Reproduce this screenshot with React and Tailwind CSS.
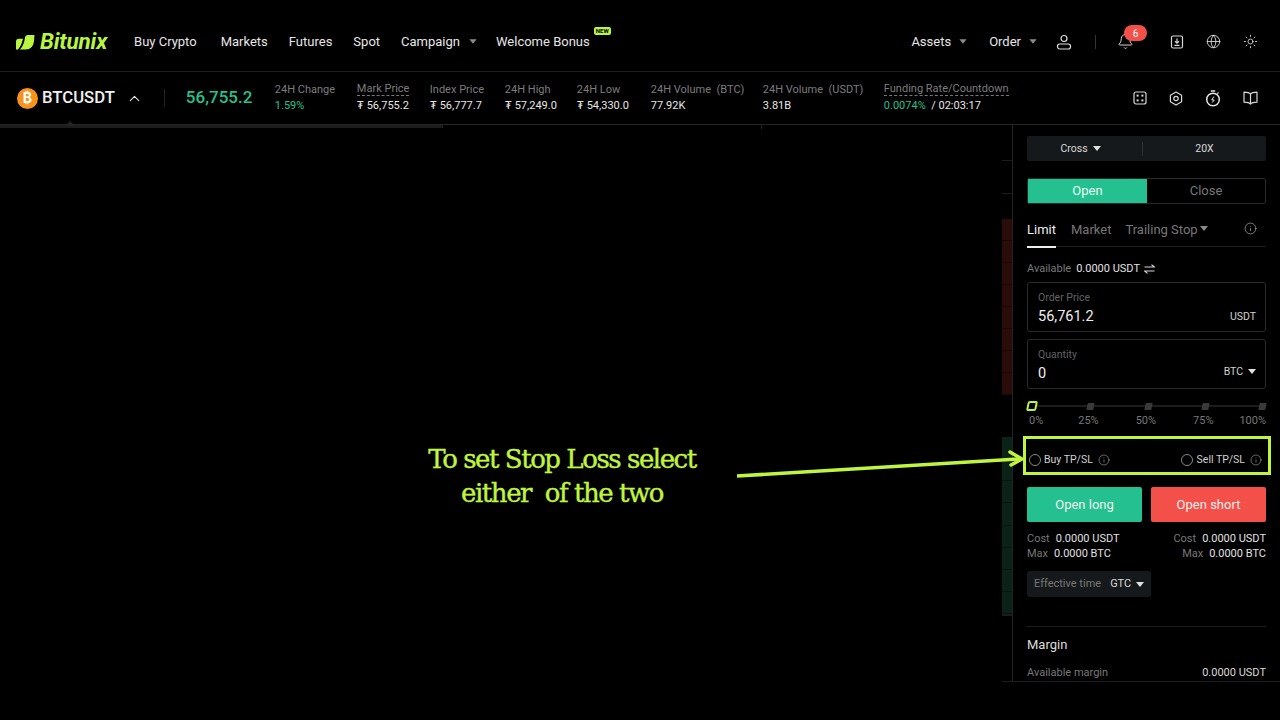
import { Info, ChevronUp, Bell, Globe, Sun } from 'lucide-react'

const navLinks = [
  { label: 'Buy Crypto', cls: 'ml-[27px]' },
  { label: 'Markets', cls: 'ml-[24px]' },
  { label: 'Futures', cls: 'ml-[21px]' },
  { label: 'Spot', cls: 'ml-[21px]' },
]

const stats = [
  { label: 'Mark Price', value: '₮ 56,755.2', w: 'w-[73px]', dashed: true },
  { label: 'Index Price', value: '₮ 56,777.7', w: 'w-[75px]' },
  { label: '24H High', value: '₮ 57,249.0', w: 'w-[72px]' },
  { label: '24H Low', value: '₮ 54,330.0', w: 'w-[74px]' },
  { label: '24H Volume  (BTC)', value: '77.92K', w: 'w-[112px]' },
  { label: '24H Volume  (USDT)', value: '3.81B', w: 'w-[121px]' },
]

const sliderTicks = [
  { label: '25%', cls: 'ml-[35px]' },
  { label: '50%', cls: 'ml-[37px]' },
  { label: '75%', cls: 'ml-[37px]' },
  { label: '100%', cls: 'ml-auto' },
]

function Caret({ className = 'border-t-[#8a8a8a]' }) {
  return <span className={`inline-block w-0 h-0 border-x-[4px] border-x-transparent border-t-[5px] ${className}`} />
}

function Logo() {
  return (
    <svg width="20" height="16" viewBox="0 0 20 16" className="shrink-0">
      <path d="M1 7.5 C1 5.5 2.5 4.8 4 4.8 L8 4.8 C7 9 5.5 13 3 15.5 L1 15.5 Z" fill="#b9f641" />
      <path d="M5 15.5 C8 12.5 9.5 8 10 3.5 C10.2 1.8 11.5 1 13 1 L19.5 1 L19 7 C18.5 12 15.5 15.5 10.5 15.5 Z" fill="#b9f641" />
    </svg>
  )
}

function BtcIcon() {
  return (
    <span className="w-[21px] h-[21px] rounded-full bg-[#f7931a] flex items-center justify-center text-white text-[14px] font-bold leading-none shrink-0">₿</span>
  )
}

function UserIcon() {
  return (
    <svg width="16" height="16" viewBox="0 0 16 16" fill="none" stroke="#e0e0e0" strokeWidth="1.2" className="ml-[19px]">
      <circle cx="8" cy="4.5" r="3" />
      <rect x="1.5" y="10" width="13" height="5" rx="2.2" />
    </svg>
  )
}

function CalcIcon() {
  return (
    <svg width="14" height="14" viewBox="0 0 14 14" fill="none" stroke="#d8d8d8" strokeWidth="1.2">
      <rect x="1" y="1" width="12" height="12" rx="2" />
      <rect x="3.6" y="3.6" width="2" height="2" fill="#d8d8d8" stroke="none" />
      <rect x="8.4" y="3.6" width="2" height="2" fill="#d8d8d8" stroke="none" />
      <rect x="3.6" y="8.4" width="2" height="2" fill="#d8d8d8" stroke="none" />
      <rect x="8.4" y="8.4" width="2" height="2" fill="#d8d8d8" stroke="none" />
    </svg>
  )
}

function SettingsHexIcon() {
  return (
    <svg width="14" height="15" viewBox="0 0 14 15" fill="none" stroke="#d8d8d8" strokeWidth="1.2">
      <path d="M7 1 12.6 4.2v6.6L7 14 1.4 10.8V4.2Z" strokeLinejoin="round" />
      <circle cx="7" cy="7.5" r="2.2" />
    </svg>
  )
}

function StopwatchIcon() {
  return (
    <svg width="16" height="17" viewBox="0 0 16 17" fill="none" stroke="#e6e6e6" strokeWidth="1.5">
      <path d="M5.8 1h4.4" />
      <path d="M12.3 3.6l1.2-1.1" strokeWidth="1.2" />
      <circle cx="8" cy="9.5" r="6.3" />
      <path d="M8.8 6.6 6.8 10h2.4l-2 2.6" strokeWidth="1" />
    </svg>
  )
}

function BookIcon() {
  return (
    <svg width="15" height="14" viewBox="0 0 15 14" fill="none" stroke="#d8d8d8" strokeWidth="1.2">
      <path d="M7.5 3 C6.5 1.8 4.5 1.2 1 1.2 V11.2 C4.5 11.2 6.5 11.8 7.5 13 C8.5 11.8 10.5 11.2 14 11.2 V1.2 C10.5 1.2 8.5 1.8 7.5 3 Z" strokeLinejoin="round" />
      <path d="M7.5 3v10" />
    </svg>
  )
}

function DownloadIcon() {
  return (
    <svg width="14" height="14" viewBox="0 0 14 14" fill="none" stroke="#d8d8d8" strokeWidth="1.2">
      <rect x="1.5" y="1" width="11" height="12" rx="1.5" />
      <path d="M7 3.5v4.5M5 6.3 7 8.2l2-1.9M4.5 10.4h5" />
    </svg>
  )
}

function SwapIcon() {
  return (
    <svg width="11" height="10" viewBox="0 0 11 10" fill="none" stroke="#d8d8d8" strokeWidth="1.2" className="ml-[4px]">
      <path d="M0.5 3h10L7.5 0.6" />
      <path d="M10.5 7H0.5L3.5 9.4" />
    </svg>
  )
}

function TopNav() {
  return (
    <header className="h-[72px] shrink-0 flex items-center pl-[15px] pr-[22px] pt-[12px] border-b border-[#1f1f1f] text-[#e6e6e6] text-[13px]">
      <Logo />
      <span className="ml-[5px] text-[22.5px] font-bold italic text-[#b9f641] leading-none tracking-[-0.2px]">Bitunix</span>
      {navLinks.map((l) => (
        <a key={l.label} className={l.cls}>{l.label}</a>
      ))}
      <a className="ml-[21px] flex items-center gap-[9px]">Campaign <Caret className="border-t-[#8a8a8a] scale-90" /></a>
      <a className="ml-[19px] relative">
        Welcome Bonus
        <span className="absolute -top-[5px] -right-[21px] bg-[#b9f641] text-black text-[6px] font-bold leading-none px-[2px] py-[1px] rounded-[2px]">NEW</span>
      </a>
      <div className="ml-auto flex items-center">
        <a className="flex items-center gap-[8px]">Assets <Caret className="border-t-[#8a8a8a] scale-90" /></a>
        <a className="ml-[22px] flex items-center gap-[8px]">Order <Caret className="border-t-[#8a8a8a] scale-90" /></a>
        <UserIcon />
        <span className="ml-[23px] w-px h-[14px] bg-[#333]" />
        <span className="ml-[21px] relative flex">
          <Bell size={17} strokeWidth={1.3} />
          <span className="absolute -top-[8px] left-[7px] w-[23px] h-[16px] rounded-full bg-[#f4504a] text-white text-[10px] flex items-center justify-center">6</span>
        </span>
        <span className="ml-[36px] flex"><DownloadIcon /></span>
        <Globe size={15} className="ml-[22px]" strokeWidth={1.3} />
        <Sun size={15} className="ml-[22px]" strokeWidth={1.3} />
      </div>
    </header>
  )
}

function TickerBar() {
  return (
    <div className="h-[53px] shrink-0 flex items-center pl-[17px] pr-[22px] border-b border-[#242424]">
      <BtcIcon />
      <span className="ml-[4px] text-[16.7px] font-medium text-[#f0f0f0]">BTCUSDT</span>
      <ChevronUp size={17} className="ml-[11px] text-[#e0e0e0]" strokeWidth={1.5} />
      <span className="ml-[21px] w-px h-[18px] bg-[#222]" />
      <span className="ml-[21px] text-[17px] font-medium text-[#25c08f] w-[89px]">56,755.2</span>
      <div className="w-[82px] text-[11px] leading-none -translate-y-px">
        <div className="text-[#7d7d7d]">24H Change</div>
        <div className="text-[#25c08f] mt-[5px]">1.59%</div>
      </div>
      {stats.map((s) => (
        <div key={s.label} className={`${s.w} shrink-0 text-[11px] leading-none -translate-y-px`}>
          <div className={`text-[#7d7d7d] whitespace-pre ${s.dashed ? 'w-fit border-b border-dashed border-[#777] pb-[1px]' : ''}`}>{s.label}</div>
          <div className={`text-[#e6e6e6] ${s.dashed ? 'mt-[4px]' : 'mt-[5px]'}`}>{s.value}</div>
        </div>
      ))}
      <div className="text-[11px] leading-none -translate-y-px">
        <div className="text-[#7d7d7d] border-b border-dashed border-[#777] pb-[1px]">Funding Rate/Countdown</div>
        <div className="mt-[4px] text-[#e6e6e6]"><span className="text-[#25c08f]">0.0074%</span> &nbsp;/ 02:03:17</div>
      </div>
      <div className="ml-auto flex items-center text-[#d8d8d8] gap-[22px]">
        <CalcIcon />
        <SettingsHexIcon />
        <StopwatchIcon />
        <BookIcon />
      </div>
    </div>
  )
}

function ChartPane() {
  return (
    <div className="flex-1 flex items-start">
      <div className="relative w-[443px] h-[3px] bg-[#1c1c1c]">
        <span className="absolute left-[65px] -top-[4px] w-0 h-0 border-x-[5px] border-x-transparent border-b-[5px] border-b-[#242424]" />
      </div>
      <span className="ml-[318px] w-px h-[4px] bg-[#242424]" />
    </div>
  )
}

function OrderBookStrip() {
  const rows = Array.from({ length: 8 })
  return (
    <div className="w-[11px] shrink-0 flex flex-col border-r border-[#242424]">
      <div className="h-[36px] border-b border-[#1c1c1c]" />
      <div className="h-[33px] border-b border-[#1c1c1c]" />
      <div className="h-[25px]" />
      <div className="h-[176px] flex flex-col">
        {rows.map((_, i) => (
          <div key={i} className="flex-1 border-b border-[#190706] bg-[#2a0c0a]" />
        ))}
      </div>
      <div className="h-[42px]" />
      <div className="h-[179px] flex flex-col border-b-2 border-[#1c1c1c]">
        {rows.map((_, i) => (
          <div key={i} className="flex-1 border-b border-[#07150f] bg-[#0b2219]" />
        ))}
      </div>
    </div>
  )
}

function Field({ label, value, unit, unitClass = '' }) {
  return (
    <div className="h-[50px] border border-[#2a2a2a] rounded-[3px] pl-[10px] pr-[9px] pt-[10px]">
      <div className="text-[10.5px] leading-none text-[#626262]">{label}</div>
      <div className="mt-[4px] flex items-center justify-between">
        <span className="text-[14.5px] leading-[18px] text-[#eeeeee]">{value}</span>
        <span className={`text-[10.5px] text-[#d0d0d0] flex items-center gap-[5px] ${unitClass}`}>{unit}</span>
      </div>
    </div>
  )
}

function PercentSlider() {
  return (
    <div className="mt-[12px]">
      <div className="relative h-[10px] flex items-center justify-between">
        <div className="absolute inset-x-0 top-[4px] h-[2px] bg-[#1c1c1c]" />
        <span className="relative w-[10px] h-[10px] border-2 border-[#b9f641] bg-black rounded-[2px] -skew-x-12" />
        {sliderTicks.map((t) => (
          <span key={t.label} className="relative w-[7px] h-[7px] bg-[#3a3a3a] rounded-[1px] -skew-x-12" />
        ))}
      </div>
      <div className="mt-[4px] pl-[2px] flex text-[11px] leading-[12px] text-[#777]">
        <span>0%</span>
        {sliderTicks.map((t) => <span key={t.label} className={t.cls}>{t.label}</span>)}
      </div>
    </div>
  )
}

function CostColumn({ align = '' }) {
  return (
    <div className={align}>
      <div><span className="text-[#777]">Cost</span><span className="ml-[6px] text-[#e0e0e0]">0.0000 USDT</span></div>
      <div><span className="text-[#777]">Max</span><span className="ml-[6px] text-[#e0e0e0]">0.0000 BTC</span></div>
    </div>
  )
}

function OrderPanel() {
  return (
    <aside className="w-[267px] shrink-0 pl-[14px] pr-[14px] pt-[11px] overflow-hidden text-[11px]">
      <div className="h-[25px] bg-[#16191b] rounded-[2px] flex items-center text-[#d8d8d8] text-[10.5px]">
        <span className="w-[115px] pr-[8px] flex items-center justify-center gap-[5px]">Cross <Caret className="border-t-[#e0e0e0]" /></span>
        <span className="w-px h-[14px] bg-[#2c2f31]" />
        <span className="flex-1 text-center">20X</span>
      </div>

      <div className="mt-[17px] h-[26px] border border-[#2a2a2a] rounded-[2px] flex text-[13px]">
        <span className="w-[119px] bg-[#25c08f] flex items-center justify-center text-[#eafff6]">Open</span>
        <span className="flex-1 flex items-center justify-center text-[#777]">Close</span>
      </div>

      <div className="mt-[16px] h-[27px] border-b border-[#1c1c1c] flex text-[13px] relative">
        <span className="text-[#eeeeee] relative h-[27px]">
          Limit
          <span className="absolute left-0 right-0 bottom-[-1px] h-[2px] bg-[#eeeeee]" />
        </span>
        <span className="ml-[15px] text-[#777]">Market</span>
        <span className="ml-[14px] text-[#777] flex items-start gap-[2px]">Trailing Stop <Caret className="border-t-[#8a8a8a] mt-[6px]" /></span>
        <Info size={13} strokeWidth={1.2} className="absolute right-[9px] top-[2px] text-[#bbb]" />
      </div>

      <div className="mt-[16px] flex items-center h-[12px] text-[11px]">
        <span className="text-[#777]">Available</span>
        <span className="ml-[5px] text-[#e0e0e0]">0.0000 USDT</span>
        <SwapIcon />
      </div>

      <div className="mt-[7px]">
        <Field label="Order Price" value="56,761.2" unit="USDT" />
      </div>
      <div className="mt-[7px]">
        <Field label="Quantity" value="0" unit={<>BTC <Caret className="border-t-[#e0e0e0]" /></>} unitClass="-translate-y-[2px]" />
      </div>

      <PercentSlider />

      <div className="mt-[24px] h-[18px] flex items-center text-[10.5px] text-[#d0d0d0] pl-[2px] pr-[4px]">
        <span className="w-[12px] h-[12px] rounded-full border border-[#888]" />
        <span className="ml-[3px]">Buy TP/SL</span>
        <Info size={12} strokeWidth={1.1} className="ml-[5px] text-[#bbb]" />
        <span className="ml-auto w-[12px] h-[12px] rounded-full border border-[#888]" />
        <span className="ml-[4px]">Sell TP/SL</span>
        <Info size={12} strokeWidth={1.1} className="ml-[5px] text-[#bbb]" />
      </div>

      <div className="mt-[18px] flex gap-[9px] text-[13px] text-[#f0f0f0]">
        <button className="flex-1 h-[35px] rounded-[2px] bg-[#25c08f]">Open long</button>
        <button className="flex-1 h-[35px] rounded-[2px] bg-[#f4504a]">Open short</button>
      </div>

      <div className="mt-[9px] flex justify-between text-[11px] leading-[15px]">
        <CostColumn />
        <CostColumn align="text-right" />
      </div>

      <div className="mt-[10px] w-[124px] h-[26px] bg-[#16191b] rounded-[3px] flex items-center pl-[7px] text-[11px]">
        <span className="text-[#777]">Effective time</span>
        <span className="ml-[9px] text-[#d8d8d8]">GTC</span>
        <Caret className="ml-[5px] border-t-[#e0e0e0]" />
      </div>

      <div className="mt-[29px] border-t border-[#1c1c1c] pt-[10px]">
        <div className="text-[13px] leading-[16px] text-[#dddddd]">Margin</div>
        <div className="mt-[14px] flex justify-between text-[11px] leading-[12px]">
          <span className="text-[#777]">Available margin</span>
          <span className="text-[#d8d8d8]">0.0000 USDT</span>
        </div>
      </div>
    </aside>
  )
}

function Annotation() {
  return (
    <>
      <div className="absolute left-[412px] top-[442px] w-[300px] text-center text-[#c0f53f] text-[26px] leading-[34px] whitespace-pre font-['DejaVu_Serif',serif] tracking-[-1.45px] [-webkit-text-stroke:0.4px_#c0f53f]">
        {'To set Stop Loss select\neither  of the two'}
      </div>
      <svg className="absolute left-[730px] top-[445px]" width="300" height="40" viewBox="0 0 300 40" fill="none" stroke="#c0f53f" strokeWidth="3.5">
        <path d="M7 31 L290 14" />
        <path d="M280 7 L292 14 L281 20" strokeLinecap="round" strokeLinejoin="round" />
      </svg>
      <div className="absolute left-[1023px] top-[436px] w-[248px] h-[39px] border-[3px] border-[#c0f53f]" />
    </>
  )
}

export default function App() {
  return (
    <div className="relative w-[1280px] h-[720px] bg-black overflow-hidden font-['Roboto','Inter',sans-serif] flex flex-col">
      <TopNav />
      <TickerBar />
      <div className="h-[557px] shrink-0 flex">
        <ChartPane />
        <div className="w-[278px] shrink-0 flex border-b border-[#1c1c1c]">
          <OrderBookStrip />
          <OrderPanel />
        </div>
      </div>
      <Annotation />
    </div>
  )
}
